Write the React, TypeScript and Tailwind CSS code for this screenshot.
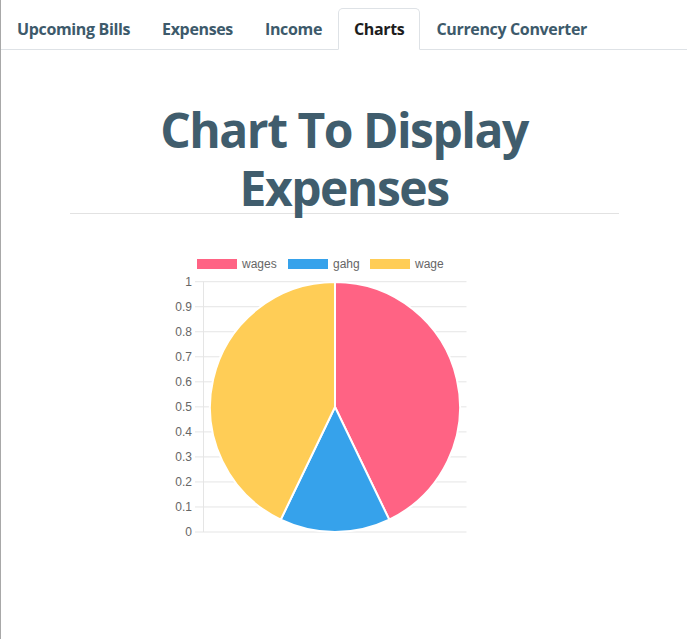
import React from "react";

const tabs = ["Upcoming Bills", "Expenses", "Income", "Charts", "Currency Converter"];

function PieChart() {
  const ticks = ["1", "0.9", "0.8", "0.7", "0.6", "0.5", "0.4", "0.3", "0.2", "0.1", "0"];
  const y0 = 31.7;
  const step = 25.03;
  return (
    <svg width={320} height={300} className="block" style={{ fontFamily: '"Liberation Sans", Arial, sans-serif' }}>
      <rect x={37} y={9} width={40} height={10} fill="#ff6384" />
      <text x={82} y={18} fontSize={12} fill="#666">wages</text>
      <rect x={128} y={9} width={40} height={10} fill="#36a2eb" />
      <text x={173} y={18} fontSize={12} fill="#666">gahg</text>
      <rect x={210} y={9} width={40} height={10} fill="#ffcd56" />
      <text x={255} y={18} fontSize={12} fill="#666">wage</text>
      {ticks.map((t, i) => (
        <g key={t}>
          <line x1={35} x2={306.5} y1={y0 + i * step} y2={y0 + i * step} stroke="#e5e5e5" strokeWidth={1} />
          <text x={32} y={y0 + i * step + 4} fontSize={12} fill="#666" textAnchor="end">{t}</text>
        </g>
      ))}
      <line x1={43.5} x2={43.5} y1={y0} y2={y0 + 10 * step} stroke="#e5e5e5" strokeWidth={1} />
      <g stroke="#fff" strokeWidth={2} strokeLinejoin="round">
        <path d="M175 157 L175 32 A125 125 0 0 1 229.24 269.62 Z" fill="#ff6384" />
        <path d="M175 157 L229.24 269.62 A125 125 0 0 1 120.76 269.62 Z" fill="#36a2eb" />
        <path d="M175 157 L120.76 269.62 A125 125 0 0 1 175 32 Z" fill="#ffcd56" />
      </g>
    </svg>
  );
}

export default function App() {
  return (
    <div className="flex min-h-[639px] bg-white" style={{ fontFamily: '"Open Sans", "Noto Sans", sans-serif' }}>
      <div className="w-px shrink-0 bg-[#a8a8a8]" />
      <div className="flex-1">
        <nav className="mt-2 flex border-b border-[#dee2e6]">
          {tabs.map((t) => {
            const active = t === "Charts";
            return (
              <div
                key={t}
                className={
                  active
                    ? "-mb-px rounded-t-[5px] border border-[#dee2e6] border-b-white bg-white px-[15px] py-2 text-[16px] font-bold leading-6 tracking-[-0.35px] text-[#1d1d1d]"
                    : "-mb-px rounded-t-[5px] border border-transparent px-[15px] py-2 text-[16px] font-bold leading-6 tracking-[-0.35px] text-[#3d5a6b]"
                }
              >
                {t}
              </div>
            );
          })}
        </nav>
        <div className="mx-auto w-[549px]">
          <h1 className="mb-[-4px] mt-[51px] text-center text-[48px] font-bold leading-[58px] tracking-[-1.5px] text-[#405d6d]">
            Chart To Display Expenses
          </h1>
          <div className="h-px bg-[#e2e2e2]" />
        </div>
        <div className="ml-[159px] mt-[36px]">
          <PieChart />
        </div>
      </div>
    </div>
  );
}
